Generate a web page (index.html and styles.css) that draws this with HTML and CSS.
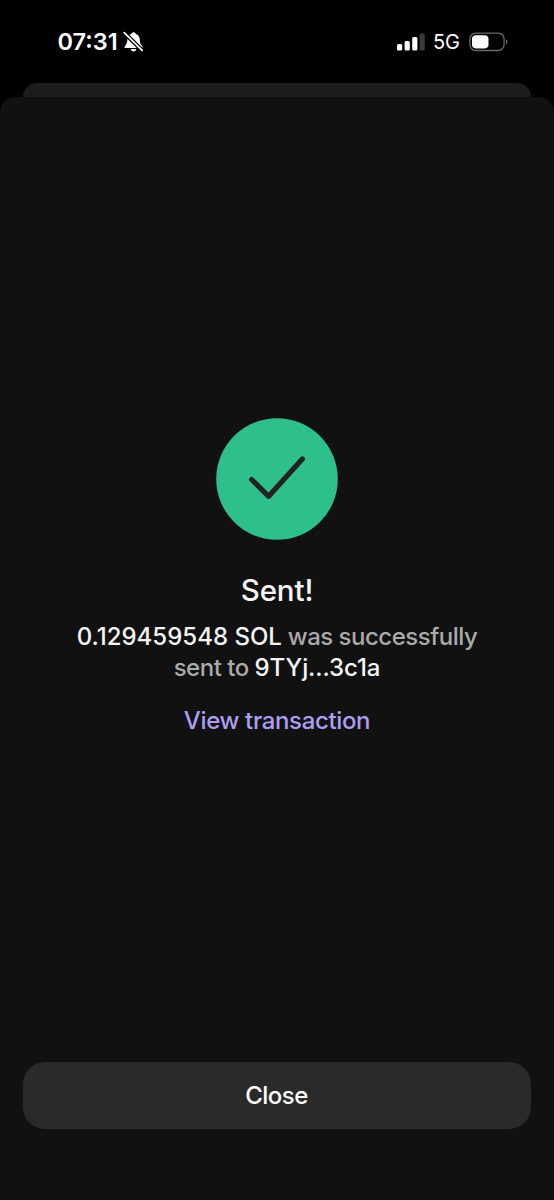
FILE: index.html
```html
<!DOCTYPE html>
<html lang="en">
<head>
<meta charset="utf-8">
<title>Sent</title>
<link rel="stylesheet" href="styles.css">
</head>
<body>
<div class="screen">
  <header class="status">
    <div class="status-left">
      <span class="time">07:31</span>
      <svg class="bell" width="22" height="22" viewBox="0 0 22 22">
        <path fill="#fff" d="M10.500 1.200c1.300 0 2.100.8 2.300 1.800 2.600.8 3.900 3 4 5.700.1 3.400.9 4.700 2.300 6.200.9 1 .6 2.200-.7 2.200H2.700c-1.300 0-1.600-1.200-.7-2.200 1.400-1.500 2.200-2.800 2.300-6.200.1-2.700 1.400-4.900 4-5.700.2-1 1-1.800 2.200-1.800zM7.700 18.100h5.700c-.3 1.500-1.400 2.400-2.850 2.400s-2.600-.9-2.850-2.400z"/>
        <path stroke="#000" stroke-width="4.200" d="M0 .5L21 21.200"/>
        <path stroke="#fff" stroke-width="1.700" stroke-linecap="round" d="M1.200 1.700L19.200 19.400"/>
      </svg>
    </div>
    <div class="status-right">
      <svg class="signal" width="28" height="18" viewBox="0 0 28 18">
        <g fill="#fff">
          <rect x="0" y="11" width="5.200" height="6.500" rx="1.500"/>
          <rect x="7.600" y="8" width="5.200" height="9.500" rx="1.500"/>
          <rect x="15.200" y="4" width="5.200" height="13.500" rx="1.500"/>
        </g>
        <rect x="22.600" y="0.500" width="5.200" height="17" rx="1.500" fill="#3a3a3a"/>
      </svg>
      <span class="network">5G</span>
      <svg class="battery" width="40" height="20" viewBox="0 0 40 20">
        <rect x="0.900" y="1.100" width="34.200" height="17.400" rx="5.800" fill="none" stroke="#6a6a6a" stroke-width="1.300"/>
        <rect x="3" y="3.200" width="16.500" height="13.200" rx="3.800" fill="#fff"/>
        <path d="M37 7.200c1.600.8 1.600 4.400 0 5.200z" fill="#7a7a7a"/>
      </svg>
    </div>
  </header>
  <div class="back-sheet"></div>
  <main class="sheet">
    <section class="result">
      <svg class="badge" width="122" height="122" viewBox="0 0 122 122">
        <circle cx="61" cy="61" r="60.800" fill="#2ec08b"/>
        <path d="M35.600 61.500L52.700 78.300L86.300 41" fill="none" stroke="#222" stroke-width="5.200" stroke-linecap="round" stroke-linejoin="round"/>
      </svg>
      <h1 class="title">Sent!</h1>
      <p class="message"><span class="strong amount">0.129459548 SOL</span> was successfully<br>sent to <span class="strong address">9TYj...3c1a</span></p>
      <a class="link">View transaction</a>
    </section>
    <button class="close" type="button"><span>Close</span></button>
  </main>
</div>
</body>
</html>
```

FILE: styles.css
```css
body {
  margin: 0;
  background: #000;
  font-family: Inter, "Liberation Sans", sans-serif;
}

.screen {
  width: 554px;
  height: 1200px;
  display: flex;
  flex-direction: column;
  overflow: hidden;
  background: #000;
}

.status {
  box-sizing: border-box;
  height: 83px;
  padding: 0 45px 0 57.5px;
  display: flex;
  justify-content: space-between;
  align-items: center;
  color: #fff;
}

.status-left,
.status-right {
  display: flex;
  align-items: center;
}

.time {
  font-size: 23.5px;
  font-weight: 600;
  line-height: 30px;
}

.bell {
  margin-left: 5.5px;
}

.network {
  margin: 1px 9px 0 8px;
  font-size: 20px;
  line-height: 26px;
}

.back-sheet {
  height: 14px;
  margin: 0 23px;
  border-radius: 14px 14px 0 0;
  background: #1c1c1d;
}

.sheet {
  box-sizing: border-box;
  height: 1103px;
  padding: 321px 23px 71px;
  display: flex;
  flex-direction: column;
  justify-content: space-between;
  border-radius: 15px 15px 0 0;
  background: #111;
}

.result {
  display: flex;
  flex-direction: column;
  align-items: center;
  text-align: center;
}

.title {
  margin: 31px 0 12px;
  color: #f5f5f5;
  font-size: 29.5px;
  font-weight: 550;
  line-height: 38px;
  letter-spacing: -0.1px;
}

.message {
  margin: 0;
  color: #aaa;
  font-size: 24px;
  font-weight: 550;
  line-height: 31px;
  letter-spacing: -0.5px;
  white-space: nowrap;
}

.strong {
  color: #f5f5f5;
  letter-spacing: 0;
}

.address {
  letter-spacing: -0.1px;
}

.link {
  margin-top: 22px;
  color: #ab9ff2;
  font-size: 24px;
  font-weight: 550;
  line-height: 31px;
  letter-spacing: -0.35px;
}

.close {
  height: 67px;
  padding: 0 1px 0 0;
  border: 0;
  border-radius: 22px;
  background: #2a2a2a;
  color: #fff;
  font: 500 24px/31px Inter, "Liberation Sans", sans-serif;
  letter-spacing: -0.5px;
}
```
